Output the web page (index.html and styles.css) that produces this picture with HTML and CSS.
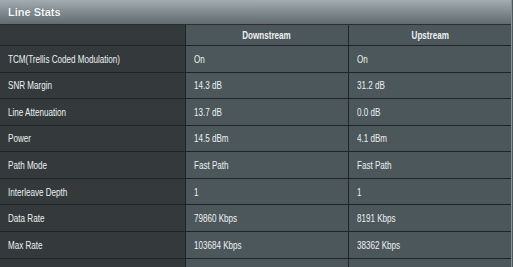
FILE: index.html
```html
<!DOCTYPE html>
<html>
<head>
<meta charset="utf-8">
<link rel="stylesheet" href="styles.css">
</head>
<body>
<div class="panel">
  <div class="title">Line Stats</div>
  <table class="stats">
    <colgroup>
      <col class="c-label">
      <col class="c-down">
      <col class="c-up">
    </colgroup>
    <thead>
      <tr><th class="lbl"></th><th><span class="t">Downstream</span></th><th><span class="t">Upstream</span></th></tr>
    </thead>
    <tbody>
      <tr><td class="lbl"><span class="t">TCM(Trellis Coded Modulation)</span></td><td><span class="t">On</span></td><td><span class="t">On</span></td></tr>
      <tr><td class="lbl"><span class="t">SNR Margin</span></td><td><span class="t">14.3 dB</span></td><td><span class="t">31.2 dB</span></td></tr>
      <tr><td class="lbl"><span class="t">Line Attenuation</span></td><td><span class="t">13.7 dB</span></td><td><span class="t">0.0 dB</span></td></tr>
      <tr><td class="lbl"><span class="t">Power</span></td><td><span class="t">14.5 dBm</span></td><td><span class="t">4.1 dBm</span></td></tr>
      <tr><td class="lbl"><span class="t">Path Mode</span></td><td><span class="t">Fast Path</span></td><td><span class="t">Fast Path</span></td></tr>
      <tr><td class="lbl"><span class="t">Interleave Depth</span></td><td><span class="t">1</span></td><td><span class="t">1</span></td></tr>
      <tr><td class="lbl"><span class="t">Data Rate</span></td><td><span class="t">79860 Kbps</span></td><td><span class="t">8191 Kbps</span></td></tr>
      <tr><td class="lbl"><span class="t">Max Rate</span></td><td><span class="t">103684 Kbps</span></td><td><span class="t">38362 Kbps</span></td></tr>
      <tr><td class="lbl">&nbsp;</td><td>&nbsp;</td><td>&nbsp;</td></tr>
    </tbody>
  </table>
</div>
</body>
</html>
```
FILE: styles.css
```css
html, body {
  margin: 0;
  padding: 0;
  background: #4c575b;
  overflow: hidden;
}
.panel {
  width: 511px;
  border-right: 1px solid #8a9397;
  font-family: "Liberation Sans", Arial, sans-serif;
  color: #ffffff;
}
.title {
  height: 24px;
  line-height: 24px;
  padding-left: 8px;
  font-size: 11px;
  font-weight: bold;
  background: linear-gradient(to bottom, #a3acb0 0%, #7d878c 55%, #616b70 100%);
  border-bottom: 1px solid #2a2f31;
  text-shadow: 0 0 1px rgba(0,0,0,0.35);
  color: #f4f6f7;
}
.stats {
  width: 511px;
  border-collapse: collapse;
  table-layout: fixed;
  font-size: 10.5px;
}
.c-label { width: 185px; }
.c-down { width: 163px; }
.c-up { width: 163px; }
.stats th, .stats td {
  border-bottom: 1px solid #1f2426;
  border-left: 1px solid #1f2426;
  padding: 0 0 0 8px;
  text-align: left;
  white-space: nowrap;
  background: #4c575b;
  color: #eef1f2;
  overflow: hidden;
}
.stats th {
  height: 20px;
  text-align: center;
  padding: 0;
  font-weight: bold;
}
.stats td { height: 25.57px; }
.stats .lbl {
  background: #343a3c;
  border-left: none;
}
.t {
  display: inline-block;
  transform: scaleX(0.77);
  transform-origin: left center;
}
.stats th .t {
  transform-origin: center center;
}
```
